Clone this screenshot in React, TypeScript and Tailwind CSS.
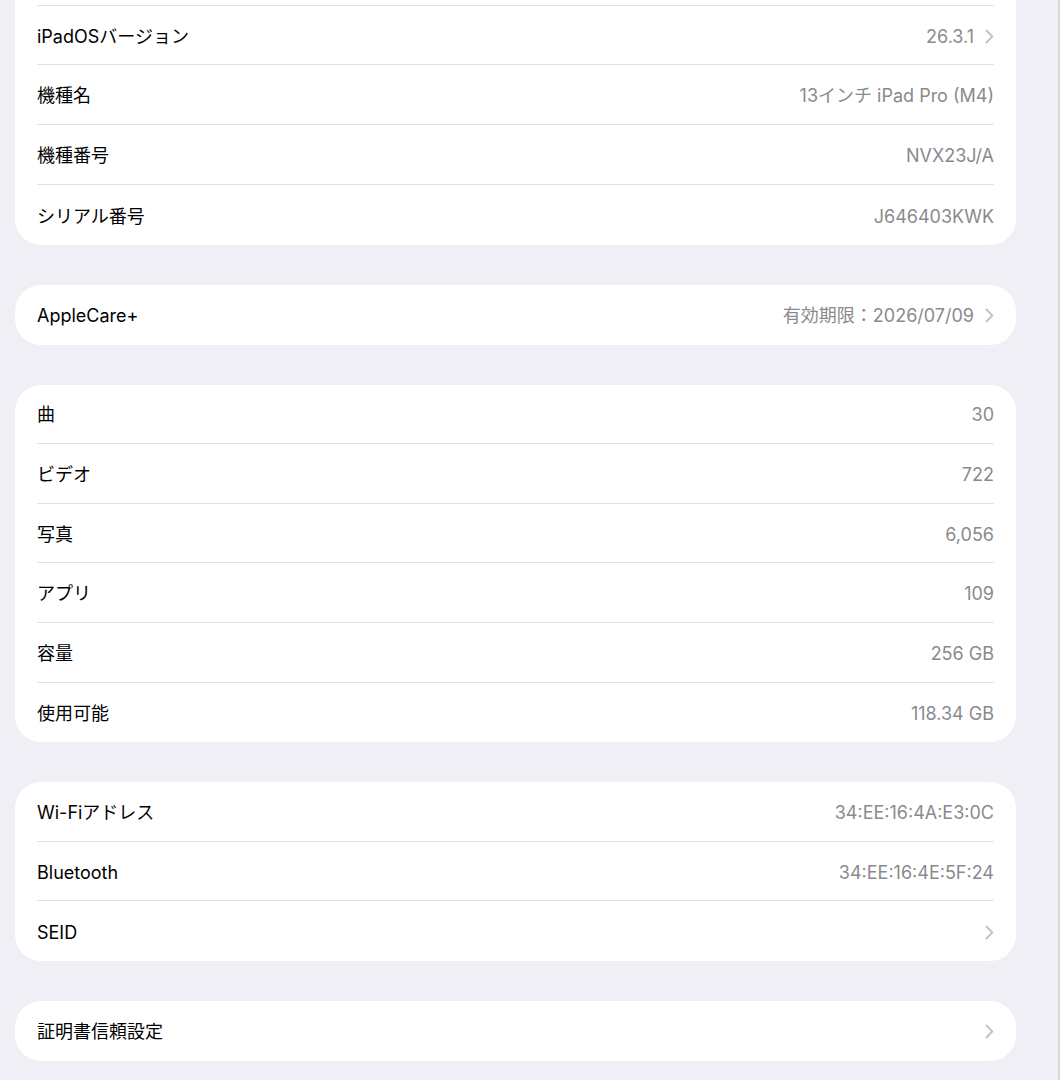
import React from 'react';

type Row = { label: string; value?: string; chevron?: boolean };

const groups: Row[][] = [
  [
    { label: 'iPadOSバージョン', value: '26.3.1', chevron: true },
    { label: '機種名', value: '13インチ iPad Pro (M4)' },
    { label: '機種番号', value: 'NVX23J/A' },
    { label: 'シリアル番号', value: 'J646403KWK' },
  ],
  [{ label: 'AppleCare+', value: '有効期限：2026/07/09', chevron: true }],
  [
    { label: '曲', value: '30' },
    { label: 'ビデオ', value: '722' },
    { label: '写真', value: '6,056' },
    { label: 'アプリ', value: '109' },
    { label: '容量', value: '256 GB' },
    { label: '使用可能', value: '118.34 GB' },
  ],
  [
    { label: 'Wi-Fiアドレス', value: '34:EE:16:4A:E3:0C' },
    { label: 'Bluetooth', value: '34:EE:16:4E:5F:24' },
    { label: 'SEID', chevron: true },
  ],
  [{ label: '証明書信頼設定', chevron: true }],
];

const Chevron: React.FC = () => (
  <svg width="9" height="15" viewBox="0 0 9 15" className="shrink-0 ml-[11px]">
    <path d="M1.5 1.5 L7.2 7.5 L1.5 13.5" fill="none" stroke="#c4c4c8" strokeWidth="2" strokeLinecap="round" strokeLinejoin="round" />
  </svg>
);

// the first group continues above the top of the screen, so it has no top corners
const Card: React.FC<{ rows: Row[]; first?: boolean }> = ({ rows, first }) => (
  <div className={`w-[1001px] bg-white px-[22px] ${first ? 'rounded-b-[26px] pt-[5px]' : 'rounded-[26px]'}`}>
    {rows.map((r, i) => (
      <div
        key={r.label}
        className={`flex ${first ? 'h-[60px]' : 'h-[59.6px]'} items-center justify-between pt-[2px] border-[#e2e2e5] ${
          i < rows.length - 1 ? 'border-b' : ''
        } ${first && i === 0 ? 'border-t' : ''}`}
      >
        <span className="text-[18px] text-black">{r.label}</span>
        <div className="flex items-center">
          {r.value && <span className="text-[18px] text-[#8a8a8e]">{r.value}</span>}
          {r.chevron && <Chevron />}
        </div>
      </div>
    ))}
  </div>
);

export default function App() {
  return (
    <div
      className="h-[1080px] w-[1060px] overflow-hidden border-r-2 border-[#d8d8dc] bg-[#f0eff5] pl-[15px]"
      style={{ fontFamily: 'Inter, "Noto Sans CJK JP", sans-serif' }}
    >
      <div className="flex flex-col gap-[40px]">
        {groups.map((g, i) => (
          <Card key={i} rows={g} first={i === 0} />
        ))}
      </div>
    </div>
  );
}
